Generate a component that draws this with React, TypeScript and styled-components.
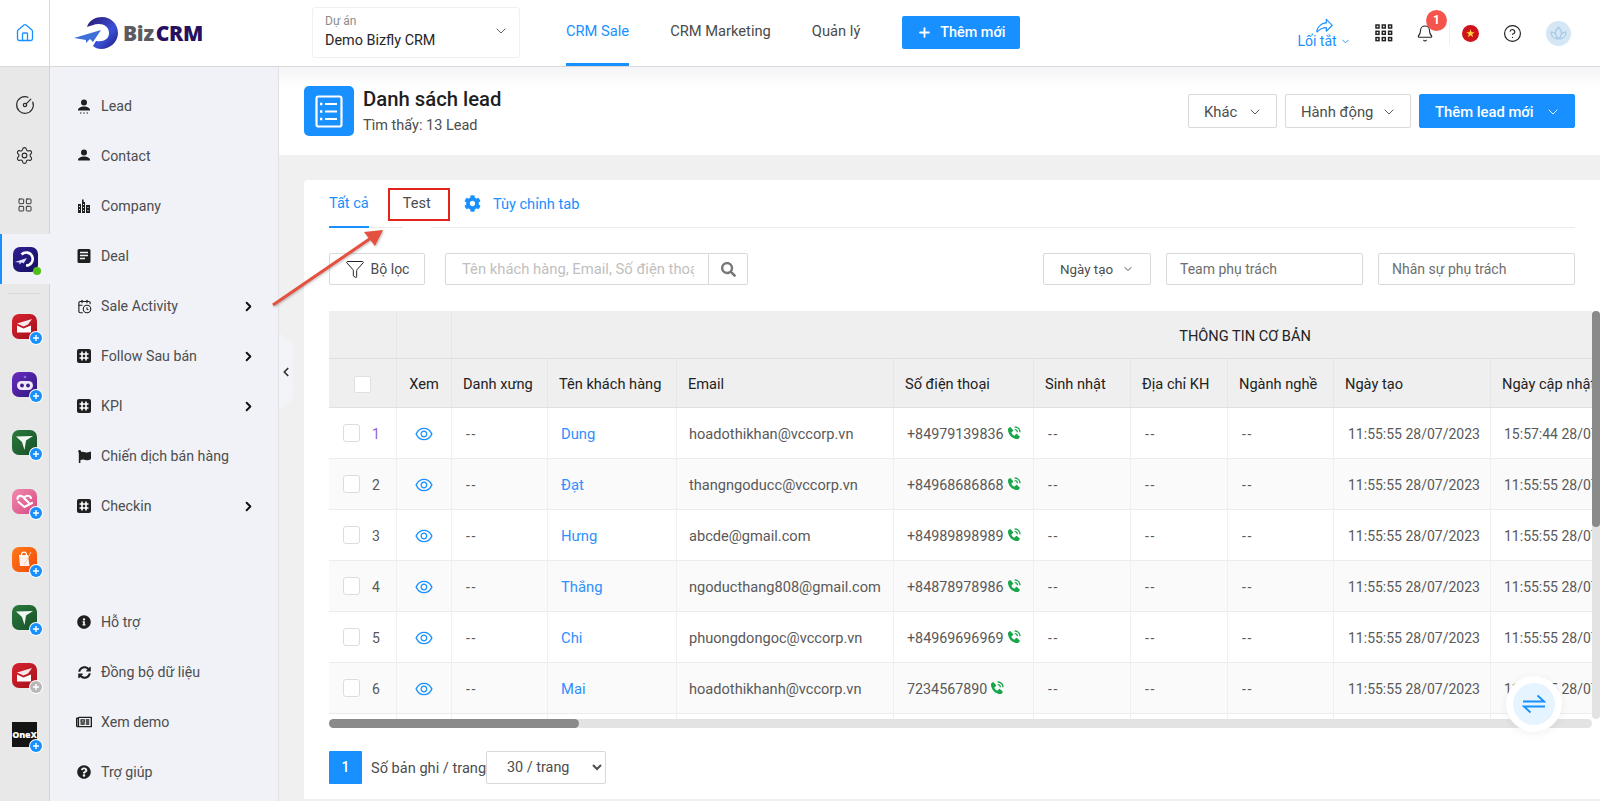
import React from "react";
import styled, { createGlobalStyle } from "styled-components";
import {
  House, CircleGauge, Settings, LayoutGrid, ChevronDown, ChevronRight, ChevronLeft, Bell, CircleHelp,
  Plus, Funnel, CalendarClock,
} from "lucide-react";
import { FaCog, FaSearch, FaInfoCircle, FaSyncAlt, FaRegNewspaper, FaQuestionCircle, FaFlag } from "react-icons/fa";
import { AiOutlineEye } from "react-icons/ai";
import { BiSolidPhoneCall } from "react-icons/bi";
import { PiShareFat } from "react-icons/pi";

const Global = createGlobalStyle`
  html, body { margin: 0; padding: 0; height: 100%; overflow: hidden; }
  body { font-family: Roboto, "Liberation Sans", sans-serif; font-size: 14px; color: #333; background: #fff; }
  * { box-sizing: border-box; }
  input::placeholder { color: inherit; opacity: 1; }
`;

const Page = styled.div`
  position: relative;
  width: 1600px;
  height: 801px;
  overflow: hidden;
  display: flex;
  flex-direction: column;
`;

/* ---------- top bar ---------- */
const TopBar = styled.header`
  height: 67px;
  flex: none;
  display: flex;
  background: #fff;
  border-bottom: 1px solid #d9d9d9;
`;
const HomeCell = styled.div`
  width: 50px;
  flex: none;
  display: flex;
  align-items: center;
  justify-content: center;
  color: #1890ff;
  border-right: 1px solid #d9d9d9;
  padding-bottom: 1px;
`;
const LogoWrap = styled.div`
  width: 262px;
  flex: none;
  display: flex;
  align-items: center;
  padding-left: 24px;
`;
const LogoText = styled.span`
  font-family: "Open Sans", Roboto, sans-serif;
  font-weight: 800;
  font-size: 21px;
  letter-spacing: -0.3px;
  color: #5c5c60;
  margin-left: -1px;
  padding-bottom: 1px;
  white-space: nowrap;
`;
const LogoStrong = styled.span`
  color: #27105f;
  margin-left: 2px;
`;
const ProjectSelect = styled.div`
  width: 208px;
  height: 51px;
  margin-top: 7px;
  border: 1px solid #f0f0f0;
  border-radius: 3px;
  padding: 6px 12px;
  position: relative;
  display: flex;
  flex-direction: column;
  gap: 4px;
`;
const ProjectLabel = styled.span`
  font-size: 12px;
  line-height: 14px;
  color: #8c8c8c;
`;
const ProjectValue = styled.span`
  font-size: 14.4px;
  line-height: 17px;
  color: #262626;
`;
const ProjectCaret = styled.span`
  position: absolute;
  right: 10px;
  top: 15px;
  color: #555;
  display: flex;
`;
const NavList = styled.nav`
  display: flex;
  gap: 41px;
  margin-left: 46px;
  height: 66px;
`;
const NavItem = styled.a<{ $active?: boolean }>`
  font-size: 14.7px;
  line-height: 63px;
  height: 66px;
  white-space: nowrap;
  color: ${(p) => (p.$active ? "#1890ff" : "#4a4a4a")};
  border-bottom: 3px solid ${(p) => (p.$active ? "#1890ff" : "transparent")};
`;
const AddButton = styled.button`
  margin: 16px 0 0 42px;
  width: 118px;
  height: 33px;
  border: 0;
  border-radius: 2px;
  background: #1890ff;
  color: #fff;
  font: 500 14.4px Roboto, sans-serif;
  display: flex;
  align-items: center;
  justify-content: center;
  gap: 8px;
`;
const RightTools = styled.div`
  margin-left: auto;
  display: flex;
  align-items: center;
  padding-right: 29px;
  position: relative;
`;
const Shortcut = styled.div`
  width: 50px;
  display: flex;
  flex-direction: column;
  align-items: center;
  color: #1890ff;
  font-size: 14px;
  line-height: 16px;
  margin-right: 26px;
`;
const ShortcutLabel = styled.span`
  display: flex;
  align-items: center;
  gap: 3px;
  margin-top: -3px;
  white-space: nowrap;
`;
const ToolIcon = styled.span<{ $w: number; $gap?: number }>`
  width: ${(p) => p.$w}px;
  margin-left: ${(p) => p.$gap ?? 0}px;
  flex: none;
  display: flex;
  justify-content: center;
  color: #222;
  position: relative;
`;
const Badge = styled.span`
  position: absolute;
  left: 10px;
  top: -14px;
  width: 21px;
  height: 21px;
  border-radius: 50%;
  background: #f5544d;
  color: #fff;
  font-size: 12px;
  font-weight: 700;
  line-height: 21px;
  text-align: center;
`;
const Divider = styled.span`
  width: 1px;
  height: 24px;
  background: #eee;
  margin: 0 12px 0 15px;
`;

/* ---------- body ---------- */
const Body = styled.div`
  flex: 1;
  min-height: 0;
  display: flex;
`;
const Rail = styled.aside`
  width: 50px;
  flex: none;
  background: #e8e8e8;
  border-right: 1px solid #d6d6d6;
  padding-top: 13px;
  display: flex;
  flex-direction: column;
`;
const RailTool = styled.div`
  height: 50px;
  flex: none;
  display: flex;
  align-items: center;
  justify-content: center;
  color: #2b2b2b;
`;
const RailActive = styled.div`
  height: 50px;
  width: 50px;
  margin-top: 4px;
  flex: none;
  display: flex;
  align-items: center;
  justify-content: center;
  background: #f0f2f7;
  border-left: 2px solid #1890ff;
  padding-right: 2px;
`;
const RailSep = styled.div`
  height: 1px;
  margin: 9px 8px 3px;
  background: #d9d9d9;
  flex: none;
`;
const RailApp = styled.div`
  height: 58.3px;
  flex: none;
  display: flex;
  align-items: center;
  justify-content: center;
`;
const Tile = styled.div<{ $bg: string; $square?: boolean }>`
  position: relative;
  width: 25px;
  height: 25px;
  border-radius: ${(p) => (p.$square ? "0" : "7px")};
  background: ${(p) => p.$bg};
  display: flex;
  align-items: center;
  justify-content: center;
`;
const PlusDot = styled.span<{ $grey?: boolean }>`
  position: absolute;
  right: -5px;
  bottom: -5px;
  width: 12px;
  height: 12px;
  border-radius: 50%;
  background: ${(p) => (p.$grey ? "#b8b8b8" : "#1890ff")};
  box-shadow: 0 0 0 1px #fff;
  color: #fff;
  display: flex;
  align-items: center;
  justify-content: center;
`;
const OnlineDot = styled.span`
  position: absolute;
  right: -3px;
  bottom: -3px;
  width: 8px;
  height: 8px;
  border-radius: 50%;
  background: #4fc018;
`;
const OneXText = styled.span`
  font: 800 9px "Open Sans", sans-serif;
  color: #fff;
  letter-spacing: -0.2px;
`;

const Sidebar = styled.aside`
  width: 229px;
  flex: none;
  background: #f0f2f7;
  border-right: 1px solid #dfe1e6;
  padding: 14px 0 4px;
  display: flex;
  flex-direction: column;
  justify-content: space-between;
`;
const MenuGroup = styled.div`
  display: flex;
  flex-direction: column;
`;
const MenuItem = styled.a`
  height: 50px;
  display: flex;
  align-items: center;
  padding-left: 25px;
  color: #4d4d4d;
  font-size: 14.2px;
  white-space: nowrap;
`;
const MenuIcon = styled.span`
  width: 26px;
  flex: none;
  display: flex;
  justify-content: center;
  color: #1f1f1f;
  padding-right: 8px;
`;
const MenuLabel = styled.span`
  flex: 1;
`;
const MenuCaret = styled.span`
  width: 30px;
  margin-right: 15px;
  color: #111;
  display: flex;
  justify-content: center;
`;
const CollapseHandle = styled.div`
  position: absolute;
  left: 279px;
  top: 333px;
  width: 14px;
  height: 77px;
  background: #f3f4f8;
  clip-path: polygon(0 0, 100% 14%, 100% 86%, 0 100%);
  display: flex;
  align-items: center;
  justify-content: flex-start;
  color: #333;
`;

const Main = styled.main`
  flex: 1;
  min-width: 0;
  background: #f0f0f0;
  display: flex;
  flex-direction: column;
`;
const PageHead = styled.div`
  height: 88px;
  flex: none;
  background: linear-gradient(#f5f5f7, #fff 22px);
  display: flex;
  align-items: flex-start;
  padding: 19px 25px 0 25px;
`;
const HeadBadge = styled.div`
  width: 50px;
  height: 50px;
  flex: none;
  border-radius: 5px;
  background: #1890ff;
  display: flex;
  align-items: center;
  justify-content: center;
`;
const HeadText = styled.div`
  margin-left: 9px;
  display: flex;
  flex-direction: column;
`;
const HeadTitle = styled.h1`
  margin: 0;
  font-size: 20.3px;
  line-height: 26px;
  font-weight: 500;
  color: #1f1f1f;
`;
const HeadSub = styled.span`
  margin-top: 5px;
  font-size: 14.5px;
  line-height: 18px;
  color: #4d4d4d;
`;
const HeadActions = styled.div`
  margin-left: auto;
  margin-top: 8px;
  display: flex;
  gap: 8px;
`;
const HeadButton = styled.button<{ $w: number; $primary?: boolean }>`
  width: ${(p) => p.$w}px;
  height: 34px;
  padding: 1px 13px 0 15px;
  border-radius: 2px;
  border: 1px solid ${(p) => (p.$primary ? "#1890ff" : "#d9d9d9")};
  background: ${(p) => (p.$primary ? "#1890ff" : "#fff")};
  color: ${(p) => (p.$primary ? "#fff" : "#4d4d4d")};
  font: ${(p) => (p.$primary ? 500 : 400)} 14.8px Roboto, sans-serif;
  display: flex;
  align-items: center;
  justify-content: space-between;
  white-space: nowrap;
`;
const Card = styled.section`
  margin: 25px 0 2px 25px;
  flex: 1;
  min-height: 0;
  background: #fff;
  border-radius: 4px 0 0 0;
  padding-left: 25px;
  display: flex;
  flex-direction: column;
`;
const TabRow = styled.div`
  height: 48px;
  flex: none;
  display: flex;
  border-bottom: 1px solid #ebebeb;
  margin-right: 25px;
`;
const Tab = styled.a<{ $active?: boolean }>`
  position: relative;
  height: 48px;
  line-height: 47px;
  margin-right: 34px;
  font-size: 14.6px;
  white-space: nowrap;
  color: ${(p) => (p.$active ? "#1890ff" : "#4d4d4d")};
  border-bottom: ${(p) => (p.$active ? "2px solid #1890ff" : "1px solid #fff")};
`;
const TabMark = styled.span`
  position: absolute;
  left: -15px;
  right: -19px;
  top: 8px;
  height: 33px;
  border: 2px solid #e3241c;
`;
const TabConfig = styled.a`
  display: flex;
  align-items: center;
  gap: 12px;
  height: 47px;
  color: #1890ff;
  font-size: 14.6px;
  margin-left: -1px;
`;
const ToolRow = styled.div`
  margin-top: 25px;
  padding-right: 25px;
  height: 32px;
  flex: none;
  display: flex;
  align-items: stretch;
`;
const FilterButton = styled.button`
  width: 96px;
  border: 1px solid #d9d9d9;
  border-radius: 2px;
  background: #fff;
  color: #4d4d4d;
  font: 14px Roboto, sans-serif;
  display: flex;
  align-items: center;
  justify-content: center;
  gap: 6px;
  margin-right: 20px;
`;
const SearchInput = styled.input`
  width: 264px;
  border: 1px solid #d9d9d9;
  border-radius: 2px 0 0 2px;
  padding: 0 14px 0 16px;
  color: #bfbfbf;
  font: 14.8px Roboto, sans-serif;
  outline: 0;
`;
const SearchButton = styled.button`
  width: 40px;
  margin-left: -1px;
  border: 1px solid #d9d9d9;
  border-radius: 0 2px 2px 0;
  background: #fff;
  color: #777;
  display: flex;
  align-items: center;
  justify-content: center;
`;
const DateButton = styled.button`
  width: 108px;
  margin-left: auto;
  border: 1px solid #d9d9d9;
  border-radius: 2px;
  background: #fff;
  color: #4d4d4d;
  font: 13.4px Roboto, sans-serif;
  display: flex;
  align-items: center;
  justify-content: center;
  gap: 9px;
`;
const PersonInput = styled.input`
  width: 197px;
  margin-left: 15px;
  border: 1px solid #d9d9d9;
  border-radius: 2px;
  padding: 0 13px;
  color: #6e6e6e;
  font: 14px Roboto, sans-serif;
  outline: 0;
`;
const TableFrame = styled.div`
  position: relative;
  margin-top: 26px;
  height: 417px;
  width: 1271px;
  flex: none;
`;
const TableViewport = styled.div`
  width: 1263px;
  height: 408px;
  overflow: hidden;
`;
const BarTrack = styled.div<{ $axis: "x" | "y" }>`
  position: absolute;
  background: #e3e3e3;
  border-radius: 5px;
  ${(p) =>
    p.$axis === "x"
      ? "left: 0; bottom: 0; width: 1263px; height: 9px;"
      : "right: 0; top: 0; width: 8px; height: 408px;"}
`;
const BarThumb = styled.div<{ $axis: "x" | "y" }>`
  background: #8a8a8a;
  border-radius: 5px;
  ${(p) => (p.$axis === "x" ? "width: 250px; height: 100%;" : "height: 216px; width: 100%;")}
`;
const Grid = styled.table`
  border-collapse: separate;
  border-spacing: 0;
  table-layout: fixed;
  width: 1710px;
  font-size: 14px;
`;
const HeadCell = styled.th<{ $center?: boolean; $h: number }>`
  height: ${(p) => p.$h}px;
  padding: 2px 0 0 ${(p) => (p.$center ? 0 : 11)}px;
  background: #efefef;
  border-right: 1px solid #e6e6e6;
  border-bottom: 1px solid #e0e0e0;
  color: #222;
  font-size: 14.6px;
  font-weight: 400;
  text-align: ${(p) => (p.$center ? "center" : "left")};
  white-space: nowrap;
  overflow: hidden;
`;
const HeadCheck = styled.span`
  display: block;
  width: 17px;
  height: 17px;
  margin: 0 auto;
  background: #fff;
  border: 1px solid #e0e0e0;
  border-radius: 2px;
`;
const Row = styled.tr<{ $even: boolean }>`
  background: ${(p) => (p.$even ? "#fafafa" : "#fff")};
`;
const Cell = styled.td<{ $pad?: number; $size?: number }>`
  height: 51px;
  padding: 2px 0 0 ${(p) => p.$pad ?? 14}px;
  border-right: 1px solid #f0f0f0;
  border-bottom: 1px solid #ececec;
  color: #595959;
  font-size: ${(p) => p.$size ?? 14}px;
  white-space: nowrap;
  overflow: hidden;
`;
const NameCell = styled(Cell)`
  color: #2f8fff;
  font-size: 14.8px;
`;
const Dash = styled.span`
  letter-spacing: 1.6px;
`;
const IndexWrap = styled.div<{ $visited?: boolean }>`
  display: flex;
  align-items: center;
  gap: 12px;
  color: ${(p) => (p.$visited ? "#8a5fd8" : "#595959")};
`;
const RowCheck = styled.span`
  width: 17px;
  height: 18px;
  margin-top: -3px;
  background: #fff;
  border: 1px solid #dcdcdc;
  border-radius: 3px;
`;
const EyeWrap = styled.div`
  display: flex;
  justify-content: center;
  color: #1890ff;
`;
const PhoneWrap = styled.div`
  display: flex;
  align-items: center;
  gap: 2px;
`;
const PhoneIcon = styled.span`
  color: #19a64a;
  display: flex;
  margin-top: -3px;
`;
const PagerRow = styled.div`
  margin-top: 23px;
  height: 33px;
  flex: none;
  display: flex;
  align-items: center;
`;
const PageNum = styled.span`
  width: 33px;
  height: 33px;
  background: #1890ff;
  border-radius: 1px;
  color: #fff;
  font-weight: 500;
  font-size: 14px;
  line-height: 33px;
  text-align: center;
`;
const PagerLabel = styled.span`
  margin-left: 9px;
  width: 115px;
  color: #4d4d4d;
  font-size: 14.6px;
  white-space: nowrap;
`;
const PagerSelect = styled.select`
  width: 120px;
  height: 33px;
  padding-left: 16px;
  border: 1px solid #d9d9d9;
  border-radius: 2px;
  background: #fff;
  color: #4d4d4d;
  font: 14.4px Roboto, sans-serif;
  outline: 0;
`;
const FloatButton = styled.div`
  position: absolute;
  left: 1506px;
  top: 676px;
  width: 56px;
  height: 56px;
  border-radius: 50%;
  background: #fff;
  box-shadow: 0 2px 10px rgba(0, 0, 0, 0.06);
  display: flex;
  align-items: center;
  justify-content: center;
`;
const FloatInner = styled.div`
  width: 42px;
  height: 42px;
  border-radius: 50%;
  background: #e6f4ff;
  display: flex;
  align-items: center;
  justify-content: center;
`;
const CalloutArrow = styled.svg`
  position: absolute;
  left: 268px;
  top: 225px;
  pointer-events: none;
  filter: drop-shadow(1px 1px 1px rgba(0, 0, 0, 0.25));
`;

/* ---------- drawings ---------- */
const LogoMark = () => (
  <svg width="50" height="36" viewBox="0 0 50 36">
    <defs>
      <linearGradient id="lg" x1="0" y1="0" x2="1" y2="1">
        <stop offset="0" stopColor="#2a1470" />
        <stop offset="0.6" stopColor="#3b50d8" />
        <stop offset="1" stopColor="#1e1a78" />
      </linearGradient>
    </defs>
    <path d="M13 12 C15 5 22 2 28 2 C37 2 44 9 44 18 C44 27 36 34 27 34 C24 34 21 33 19 31 L22 26 C30 27 35 24 35 18 C35 12 30 9 25 9 C20 9 17 11 13 12 Z" fill="url(#lg)" />
    <path d="M0 23 L27 15 L19 27 L16 24 L12 28 L12 25 Z" fill="#3f6fd8" />
  </svg>
);
const PersonIcon = ({ dots }: { dots?: boolean }) => (
  <svg width="14" height="15" viewBox="0 0 14 15" fill="currentColor">
    <circle cx="7" cy="3.6" r="3" />
    <path d="M1 11c0-2.4 3-3.6 6-3.6s6 1.2 6 3.6v.6H1z" />
    {dots && <path d="M3 13.4h1.4v1H3zM6.3 13.4h1.4v1H6.3zM9.6 13.4H11v1H9.6z" />}
  </svg>
);
const CompanyIcon = () => (
  <svg width="14" height="15" viewBox="0 0 14 15" fill="currentColor">
    <path d="M5 0.5h1.6V3H8v11H5zM1 5h3v9H1zM9 6h4v8H9z" />
    <path d="M2 7h1v1H2zM2 10h1v1H2zM10.5 8h1v1h-1zM10.5 11h1v1h-1zM6 5h1v1H6zM6 8h1v1H6zM6 11h1v1H6z" fill="#f0f2f7" />
  </svg>
);
const DealIcon = () => (
  <svg width="14" height="14" viewBox="0 0 14 14">
    <rect width="13" height="14" x="0.5" rx="1.5" fill="currentColor" />
    <path d="M3 3.5h8M3 6.5h8M3 9.5h5" stroke="#f0f2f7" strokeWidth="1.4" />
  </svg>
);
const HashIcon = () => (
  <svg width="14" height="14" viewBox="0 0 14 14">
    <rect width="14" height="14" rx="2" fill="currentColor" />
    <path d="M5 2.5v9M9 2.5v9M2.5 5h9M2.5 9h9" stroke="#fff" strokeWidth="1.6" />
  </svg>
);
const CrmGlyph = () => (
  <svg width="20" height="18" viewBox="0 0 20 18" fill="none">
    <path d="M6.5 4.5 A6.5 6.5 0 1 1 11 15.5" stroke="#fff" strokeWidth="2.6" />
    <path d="M0 12 L12 8 L8.5 13.5 L7 12.2 L4.5 14.5 L4.5 12.4 Z" fill="#dfe3ff" />
  </svg>
);
const MailGlyph = () => (
  <svg width="19" height="17" viewBox="0 0 19 17" fill="#fff">
    <path d="M2 5.5 L17 1 L13 6.5 L8.5 8.5 Z" opacity="0.9" />
    <path d="M2 7.5 L8.5 10.5 L16 7.5 L16 14.5 L2 14.5 Z" />
  </svg>
);
const BotGlyph = () => (
  <svg width="20" height="18" viewBox="0 0 20 18">
    <circle cx="10" cy="2" r="1.3" fill="#7d74e8" />
    <rect x="2" y="6" width="16" height="9" rx="4.5" fill="#efeafc" />
    <circle cx="7" cy="10.5" r="1.9" fill="#3d1c8f" />
    <circle cx="13" cy="10.5" r="1.9" fill="#3d1c8f" />
  </svg>
);
const PlaneGlyph = () => (
  <svg width="19" height="19" viewBox="0 0 19 19" fill="#f3f7f3">
    <path d="M1 3.5 L18 3 L11 7.5 L9.5 17 L7 9 Z" />
  </svg>
);
const HeartGlyph = () => (
  <svg width="19" height="16" viewBox="0 0 19 16" fill="none" stroke="#fff" strokeWidth="2.2" strokeLinecap="round">
    <path d="M2.5 6 C2.5 2.5 7 1.5 9 5 L14 10 M9 5 C11 1.5 15 2.5 16 5" />
    <path d="M3.5 9 L9.5 14 L17 10" />
  </svg>
);
const BagGlyph = () => (
  <svg width="17" height="18" viewBox="0 0 17 18">
    <path d="M3 5 H12 L13.5 16 H4 Z" fill="#fff" opacity="0.92" />
    <path d="M5.5 6.5 V4 A2.6 2.6 0 0 1 10.5 4 V6.5" stroke="#fff" strokeWidth="1.2" fill="none" />
    <path d="M8 15 L15 2" stroke="#ffd6b8" strokeWidth="1" />
  </svg>
);
const SmallPlus = () => (
  <svg width="8" height="8" viewBox="0 0 8 8" stroke="currentColor" strokeWidth="1.4">
    <path d="M4 1v6M1 4h6" />
  </svg>
);
const ListGlyph = () => (
  <svg width="28" height="33" viewBox="0 0 28 33" fill="none" stroke="#fff">
    <rect x="1.5" y="1.5" width="25" height="30" rx="2" strokeWidth="2.2" />
    <path d="M10 9h12M10 16.5h12M10 24h12" strokeWidth="2.2" />
    <path d="M5 9h2.4M5 16.5h2.4M5 24h2.4" strokeWidth="2.4" />
  </svg>
);
const Dots = () => (
  <svg width="18" height="18" viewBox="0 0 18 18" fill="none" stroke="#222" strokeWidth="1.5">
    {[0, 1, 2].flatMap((r) => [0, 1, 2].map((c) => <rect key={`${r}${c}`} x={1 + c * 6.3} y={1 + r * 6.3} width="3" height="3" />))}
  </svg>
);
const VnFlag = () => (
  <svg width="17" height="17" viewBox="0 0 17 17">
    <circle cx="8.5" cy="8.5" r="8.5" fill="#d0121b" />
    <path d="M8.5 4.2l1.1 3h3.1l-2.5 1.9.9 3.1-2.6-1.9-2.6 1.9.9-3.1-2.5-1.9h3.1z" fill="#ffd83a" />
  </svg>
);
const Avatar = () => (
  <svg width="25" height="25" viewBox="0 0 25 25">
    <circle cx="12.5" cy="12.5" r="12.5" fill="#d5e6f4" />
    <path d="M12.5 6c2 2 3 4 3 6s-1 4-3 6c-2-2-3-4-3-6s1-4 3-6zM5 11c2 0 4 1 5 3l1 4c-3 0-6-3-6-7zM20 11c-2 0-4 1-5 3l-1 4c3 0 6-3 6-7z" fill="none" stroke="#a9c9e4" strokeWidth="1.1" />
  </svg>
);
const SwapGlyph = () => (
  <svg width="24" height="20" viewBox="0 0 24 20" fill="none" stroke="#1890ff" strokeWidth="1.8">
    <path d="M1 7.5h21L15.5 1.5" />
    <path d="M23 12.5H2L8.5 18.5" />
  </svg>
);

const apps: { bg: string; glyph: React.ReactNode; grey?: boolean; square?: boolean }[] = [
  { bg: "linear-gradient(135deg,#d8232f,#a3101c)", glyph: <MailGlyph /> },
  { bg: "linear-gradient(135deg,#6a2bc0,#2e1a7e)", glyph: <BotGlyph /> },
  { bg: "linear-gradient(135deg,#2c7a3d,#164f28)", glyph: <PlaneGlyph /> },
  { bg: "linear-gradient(135deg,#f08ab0,#d84a80)", glyph: <HeartGlyph /> },
  { bg: "linear-gradient(135deg,#ff7a1a,#f04a05)", glyph: <BagGlyph /> },
  { bg: "linear-gradient(135deg,#2c7a3d,#164f28)", glyph: <PlaneGlyph /> },
  { bg: "linear-gradient(135deg,#d8232f,#a3101c)", glyph: <MailGlyph />, grey: true },
  { bg: "#141414", glyph: <OneXText>OneX</OneXText>, square: true },
];

const topMenu: { label: string; icon: React.ReactNode; caret?: boolean }[] = [
  { label: "Lead", icon: <PersonIcon dots /> },
  { label: "Contact", icon: <PersonIcon /> },
  { label: "Company", icon: <CompanyIcon /> },
  { label: "Deal", icon: <DealIcon /> },
  { label: "Sale Activity", icon: <CalendarClock size={15} strokeWidth={1.8} />, caret: true },
  { label: "Follow Sau bán", icon: <HashIcon />, caret: true },
  { label: "KPI", icon: <HashIcon />, caret: true },
  { label: "Chiến dịch bán hàng", icon: <FaFlag size={13} /> },
  { label: "Checkin", icon: <HashIcon />, caret: true },
];
const bottomMenu: { label: string; icon: React.ReactNode }[] = [
  { label: "Hỗ trợ", icon: <FaInfoCircle size={14} /> },
  { label: "Đồng bộ dữ liệu", icon: <FaSyncAlt size={13} /> },
  { label: "Xem demo", icon: <FaRegNewspaper size={16} /> },
  { label: "Trợ giúp", icon: <FaQuestionCircle size={14} /> },
];

const leads = [
  { name: "Dung", email: "hoadothikhan@vccorp.vn", phone: "+84979139836", updated: "15:57:44 28/07/2023" },
  { name: "Đạt", email: "thangngoducc@vccorp.vn", phone: "+84968686868", updated: "11:55:55 28/07/2023" },
  { name: "Hưng", email: "abcde@gmail.com", phone: "+84989898989", updated: "11:55:55 28/07/2023" },
  { name: "Thắng", email: "ngoducthang808@gmail.com", phone: "+84878978986", updated: "11:55:55 28/07/2023" },
  { name: "Chi", email: "phuongdongoc@vccorp.vn", phone: "+84969696969", updated: "11:55:55 28/07/2023" },
  { name: "Mai", email: "hoadothikhanh@vccorp.vn", phone: "7234567890", updated: "11:55:55 28/07/2023" },
];

const colWidths = [68, 55, 96, 129, 217, 140, 97, 97, 106, 157, 157, 391];
const columns = ["Danh xưng", "Tên khách hàng", "Email", "Số điện thoại", "Sinh nhật", "Địa chỉ KH", "Ngành nghề", "Ngày tạo", "Ngày cập nhật", ""];

export default function App() {
  return (
    <Page>
      <Global />
      <TopBar>
        <HomeCell><House size={20} strokeWidth={1.6} /></HomeCell>
        <LogoWrap>
          <LogoMark />
          <LogoText>Biz<LogoStrong>CRM</LogoStrong></LogoText>
        </LogoWrap>
        <ProjectSelect>
          <ProjectLabel>Dự án</ProjectLabel>
          <ProjectValue>Demo Bizfly CRM</ProjectValue>
          <ProjectCaret><ChevronDown size={16} strokeWidth={1.4} /></ProjectCaret>
        </ProjectSelect>
        <NavList>
          <NavItem $active>CRM Sale</NavItem>
          <NavItem>CRM Marketing</NavItem>
          <NavItem>Quản lý</NavItem>
        </NavList>
        <AddButton><Plus size={15} strokeWidth={3} />Thêm mới</AddButton>
        <RightTools>
          <Shortcut>
            <PiShareFat size={19} />
            <ShortcutLabel>Lối tắt<ChevronDown size={11} strokeWidth={2} /></ShortcutLabel>
          </Shortcut>
          <ToolIcon $w={18}><Dots /></ToolIcon>
          <ToolIcon $w={18} $gap={23}>
            <Bell size={19} strokeWidth={1.5} />
            <Badge>1</Badge>
          </ToolIcon>
          <Divider />
          <ToolIcon $w={17}><VnFlag /></ToolIcon>
          <ToolIcon $w={19} $gap={24}><CircleHelp size={19} strokeWidth={1.5} /></ToolIcon>
          <ToolIcon $w={25} $gap={24}><Avatar /></ToolIcon>
        </RightTools>
      </TopBar>
      <Body>
        <Rail>
          <RailTool><CircleGauge size={20} strokeWidth={1.4} /></RailTool>
          <RailTool><Settings size={19} strokeWidth={1.4} /></RailTool>
          <RailTool><LayoutGrid size={16} strokeWidth={1.4} /></RailTool>
          <RailActive>
            <Tile $bg="linear-gradient(135deg,#2f1f95,#14105e)">
              <CrmGlyph />
              <OnlineDot />
            </Tile>
          </RailActive>
          <RailSep />
          {apps.map((a, i) => (
            <RailApp key={i}>
              <Tile $bg={a.bg} $square={a.square}>
                {a.glyph}
                <PlusDot $grey={a.grey}><SmallPlus /></PlusDot>
              </Tile>
            </RailApp>
          ))}
        </Rail>
        <Sidebar>
          <MenuGroup>
            {topMenu.map((m) => (
              <MenuItem key={m.label}>
                <MenuIcon>{m.icon}</MenuIcon>
                <MenuLabel>{m.label}</MenuLabel>
                {m.caret && <MenuCaret><ChevronRight size={15} strokeWidth={3} /></MenuCaret>}
              </MenuItem>
            ))}
          </MenuGroup>
          <MenuGroup>
            {bottomMenu.map((m) => (
              <MenuItem key={m.label}>
                <MenuIcon>{m.icon}</MenuIcon>
                <MenuLabel>{m.label}</MenuLabel>
              </MenuItem>
            ))}
          </MenuGroup>
        </Sidebar>
        <Main>
          <PageHead>
            <HeadBadge><ListGlyph /></HeadBadge>
            <HeadText>
              <HeadTitle>Danh sách lead</HeadTitle>
              <HeadSub>Tìm thấy: 13 Lead</HeadSub>
            </HeadText>
            <HeadActions>
              <HeadButton $w={89}>Khác<ChevronDown size={16} strokeWidth={1.4} /></HeadButton>
              <HeadButton $w={126}>Hành động<ChevronDown size={16} strokeWidth={1.4} /></HeadButton>
              <HeadButton $w={156} $primary>Thêm lead mới<ChevronDown size={16} strokeWidth={1.4} /></HeadButton>
            </HeadActions>
          </PageHead>
          <Card>
            <TabRow>
              <Tab $active>Tất cả</Tab>
              <Tab>Test<TabMark /></Tab>
              <TabConfig><FaCog size={17} />Tùy chỉnh tab</TabConfig>
            </TabRow>
            <ToolRow>
              <FilterButton><Funnel size={20} strokeWidth={1.2} color="#222" />Bộ lọc</FilterButton>
              <SearchInput placeholder="Tên khách hàng, Email, Số điện thoại" />
              <SearchButton><FaSearch size={15} /></SearchButton>
              <DateButton>Ngày tạo<ChevronDown size={12} strokeWidth={2} /></DateButton>
              <PersonInput placeholder="Team phụ trách" />
              <PersonInput placeholder="Nhân sự phụ trách" />
            </ToolRow>
            <TableFrame>
              <TableViewport>
                <Grid>
                  <colgroup>
                    {colWidths.map((w, i) => <col key={i} style={{ width: w }} />)}
                  </colgroup>
                  <thead>
                    <tr>
                      <HeadCell $h={48} />
                      <HeadCell $h={48} />
                      <HeadCell $h={48} $center colSpan={10}>THÔNG TIN CƠ BẢN</HeadCell>
                    </tr>
                    <tr>
                      <HeadCell $h={49} $center><HeadCheck /></HeadCell>
                      <HeadCell $h={49} $center>Xem</HeadCell>
                      {columns.map((c, i) => <HeadCell key={i} $h={49}>{c}</HeadCell>)}
                    </tr>
                  </thead>
                  <tbody>
                    {leads.map((l, i) => (
                      <Row key={i} $even={i % 2 === 1}>
                        <Cell $pad={14}>
                          <IndexWrap $visited={i === 0}><RowCheck />{i + 1}</IndexWrap>
                        </Cell>
                        <Cell $pad={0}><EyeWrap><AiOutlineEye size={20} /></EyeWrap></Cell>
                        <Cell><Dash>--</Dash></Cell>
                        <NameCell $pad={13}>{l.name}</NameCell>
                        <Cell $pad={12} $size={14.6}>{l.email}</Cell>
                        <Cell $pad={13} $size={14.3}>
                          <PhoneWrap>{l.phone}<PhoneIcon><BiSolidPhoneCall size={16} /></PhoneIcon></PhoneWrap>
                        </Cell>
                        <Cell><Dash>--</Dash></Cell>
                        <Cell><Dash>--</Dash></Cell>
                        <Cell><Dash>--</Dash></Cell>
                        <Cell>11:55:55 28/07/2023</Cell>
                        <Cell $pad={13}>{l.updated}</Cell>
                        <Cell />
                      </Row>
                    ))}
                    <Row $even={false}>
                      {colWidths.map((_, i) => <Cell key={i} />)}
                    </Row>
                  </tbody>
                </Grid>
              </TableViewport>
              <BarTrack $axis="x"><BarThumb $axis="x" /></BarTrack>
              <BarTrack $axis="y"><BarThumb $axis="y" /></BarTrack>
            </TableFrame>
            <PagerRow>
              <PageNum>1</PageNum>
              <PagerLabel>Số bản ghi / trang</PagerLabel>
              <PagerSelect defaultValue="30">
                <option value="30">30 / trang</option>
              </PagerSelect>
            </PagerRow>
          </Card>
        </Main>
      </Body>
      <CollapseHandle><ChevronLeft size={16} strokeWidth={3} /></CollapseHandle>
      <CalloutArrow width="120" height="85" viewBox="0 0 120 85">
        <path d="M5 80 L103 13" stroke="#e5503f" strokeWidth="3" />
        <path d="M115 5 L107 21 L96 7 Z" fill="#e5503f" />
      </CalloutArrow>
      <FloatButton><FloatInner><SwapGlyph /></FloatInner></FloatButton>
    </Page>
  );
}
